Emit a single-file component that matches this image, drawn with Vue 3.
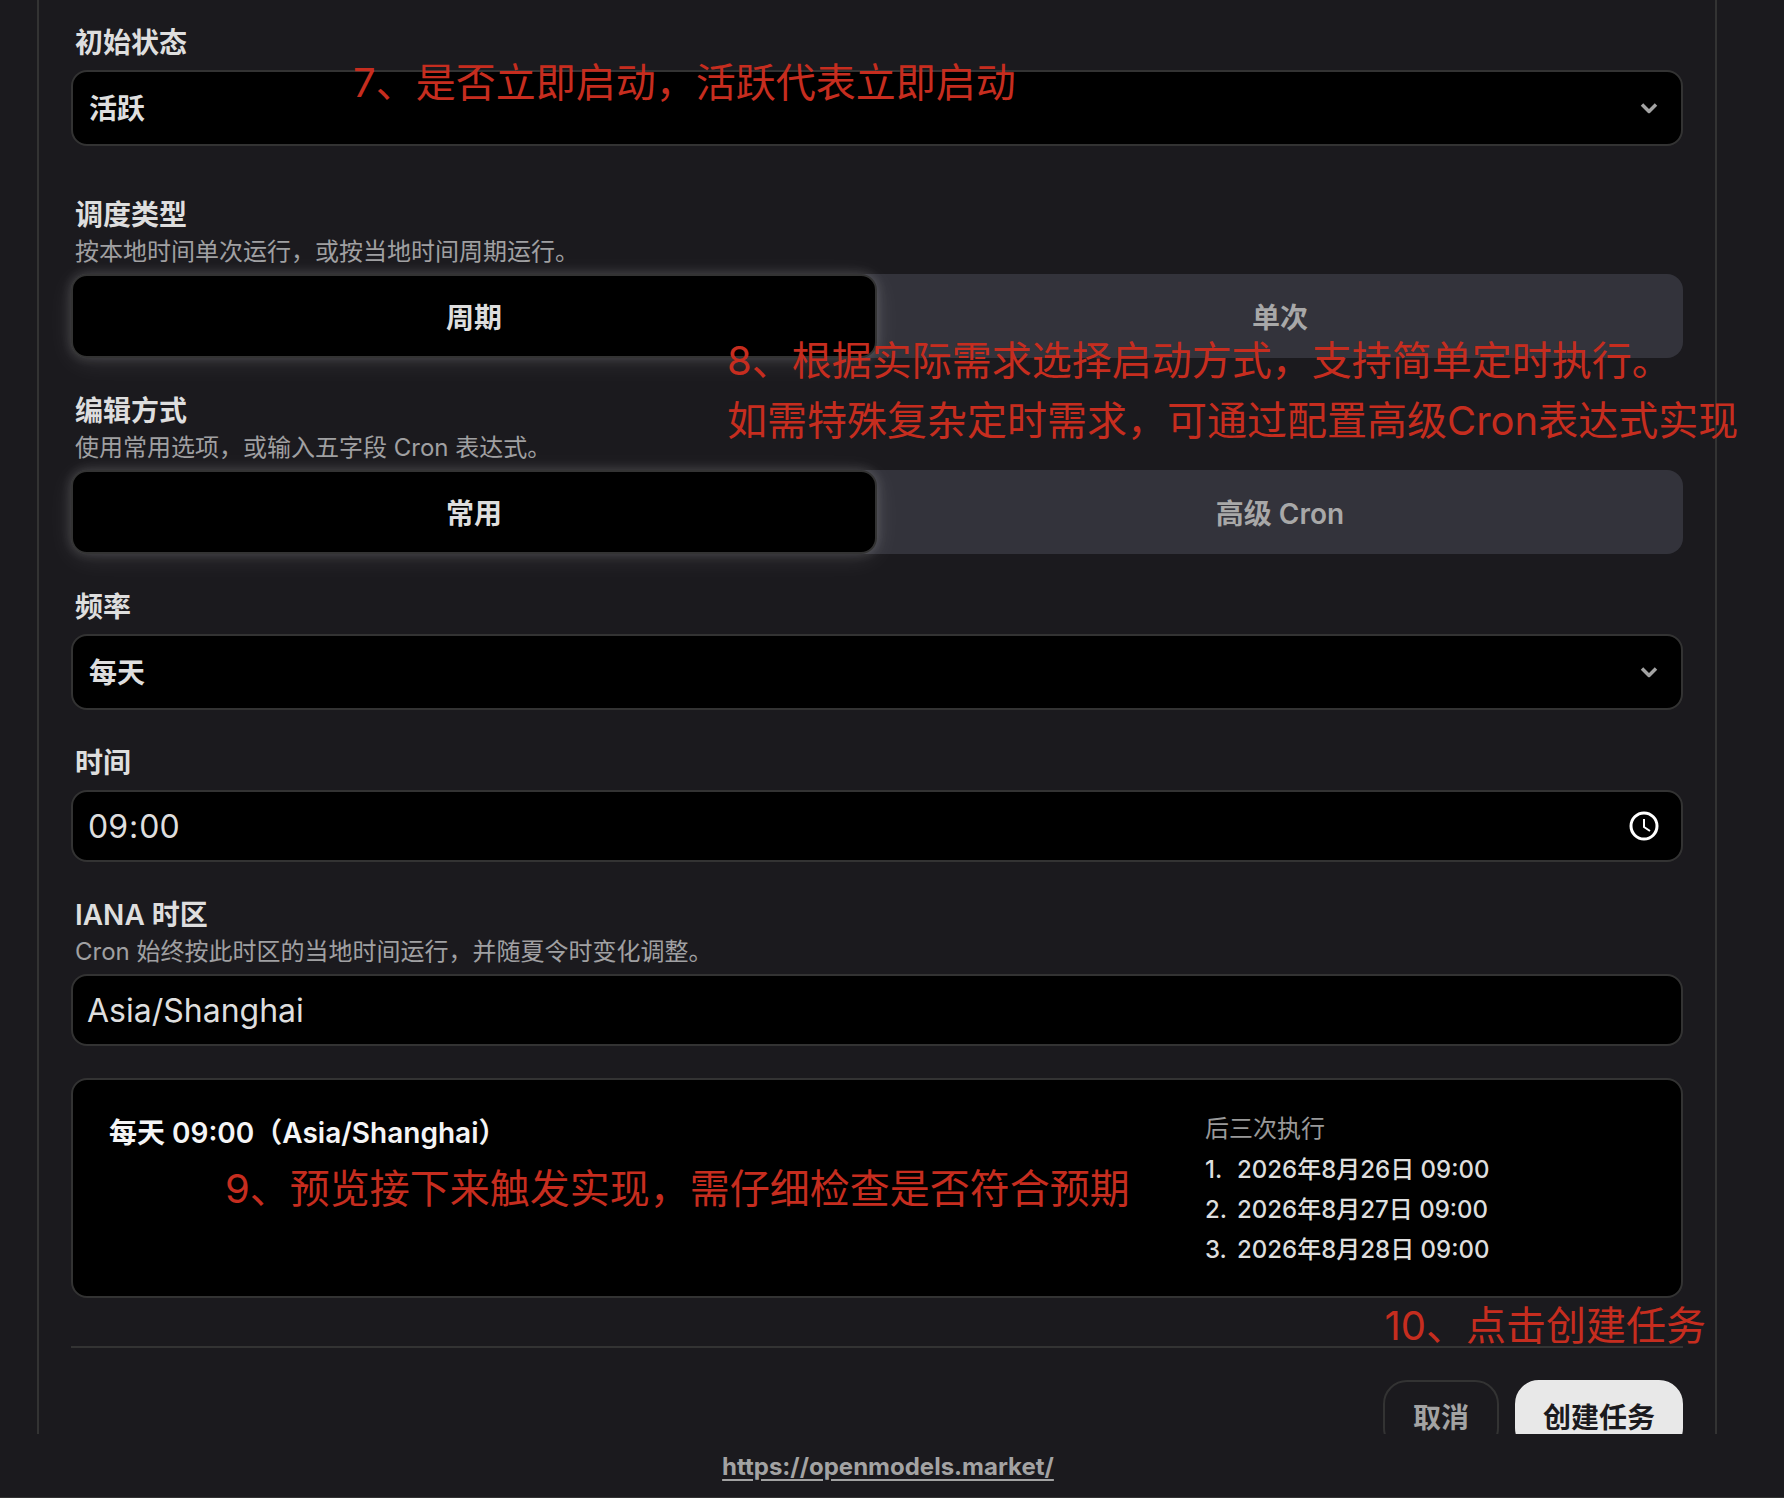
<script setup>
import { ref } from 'vue'

const status = ref('active')
const scheduleType = ref('recurring')
const editMode = ref('common')
const frequency = ref('daily')
const time = ref('09:00')
const timezone = ref('Asia/Shanghai')

const scheduleTypes = [
  { value: 'recurring', label: '周期' },
  { value: 'once', label: '单次' },
]
const editModes = [
  { value: 'common', label: '常用' },
  { value: 'cron', label: '高级 Cron' },
]
const nextRuns = ['2026年8月26日 09:00', '2026年8月27日 09:00', '2026年8月28日 09:00']
</script>

<template>
  <div class="page">
    <main class="viewport">
      <form class="panel" @submit.prevent>
        <div class="field field-last">
          <label class="label" for="status">初始状态</label>
          <div class="control">
            <select id="status" v-model="status" class="box select">
              <option value="active">活跃</option>
              <option value="paused">暂停</option>
            </select>
            <svg class="chevron" viewBox="0 0 24 24" aria-hidden="true"><path d="m6 9 6 6 6-6" /></svg>
          </div>
          <p class="note note-status">7、是否立即启动，活跃代表立即启动</p>
        </div>

        <div class="field" role="group" aria-labelledby="type-label">
          <span id="type-label" class="label">调度类型</span>
          <span class="hint">按本地时间单次运行，或按当地时间周期运行。</span>
          <div class="segment">
            <button
              v-for="item in scheduleTypes"
              :key="item.value"
              type="button"
              class="segment-item"
              :class="{ active: scheduleType === item.value }"
              :aria-pressed="scheduleType === item.value"
              @click="scheduleType = item.value"
            >{{ item.label }}</button>
          </div>
          <p class="note note-type">8、根据实际需求选择启动方式，支持简单定时执行。<br>如需特殊复杂定时需求，可通过配置高级Cron表达式实现</p>
        </div>

        <div class="field" role="group" aria-labelledby="mode-label">
          <span id="mode-label" class="label">编辑方式</span>
          <span class="hint">使用常用选项，或输入五字段 Cron 表达式。</span>
          <div class="segment">
            <button
              v-for="item in editModes"
              :key="item.value"
              type="button"
              class="segment-item"
              :class="{ active: editMode === item.value }"
              :aria-pressed="editMode === item.value"
              @click="editMode = item.value"
            >{{ item.label }}</button>
          </div>
        </div>

        <div class="field">
          <label class="label" for="frequency">频率</label>
          <div class="control">
            <select id="frequency" v-model="frequency" class="box select">
              <option value="daily">每天</option>
              <option value="weekly">每周</option>
            </select>
            <svg class="chevron" viewBox="0 0 24 24" aria-hidden="true"><path d="m6 9 6 6 6-6" /></svg>
          </div>
        </div>

        <div class="field">
          <label class="label" for="time">时间</label>
          <div class="control">
            <input id="time" v-model="time" class="box input time" type="time">
            <svg class="clock" viewBox="0 0 32 32" aria-hidden="true">
              <circle cx="16" cy="16" r="13" stroke-width="3" />
              <path d="M16 9v8l6 4" stroke-width="2" />
            </svg>
          </div>
        </div>

        <div class="field">
          <label class="label" for="timezone">IANA 时区</label>
          <span class="hint">Cron 始终按此时区的当地时间运行，并随夏令时变化调整。</span>
          <input id="timezone" v-model="timezone" class="box input" type="text">
        </div>

        <section class="preview">
          <h2 class="preview-title">每天 09:00（Asia/Shanghai）</h2>
          <div>
            <h3 class="runs-title">后三次执行</h3>
            <ol class="runs">
              <li v-for="(run, i) in nextRuns" :key="run" class="run">
                <span class="run-index">{{ i + 1 }}.</span>
                <span>{{ run }}</span>
              </li>
            </ol>
          </div>
          <p class="note note-preview">9、预览接下来触发实现，需仔细检查是否符合预期</p>
        </section>

        <div class="actions">
          <button type="button" class="btn btn-cancel">取消</button>
          <button type="submit" class="btn btn-primary">创建任务</button>
          <p class="note note-submit">10、点击创建任务</p>
        </div>
      </form>
    </main>
    <footer class="footer">
      <a class="site" href="https://openmodels.market/">https://openmodels.market/</a>
    </footer>
  </div>
</template>

<style>
body {
  margin: 0;
  background: #1b1a1e;
}
</style>

<style scoped>
.page {
  display: flex;
  flex-direction: column;
  height: 100vh;
  color: #dedede;
  font-family: Inter, "Noto Sans CJK SC", sans-serif;
  color-scheme: dark;
}

.page * {
  box-sizing: border-box;
}

.viewport {
  flex: 1;
  min-height: 0;
  overflow: hidden;
}

.panel {
  margin: 0 67px 0 37px;
  padding: 22px 32px 32px;
  border: solid #333;
  border-width: 0 2px;
}

.field {
  position: relative;
  display: flex;
  flex-direction: column;
  margin-bottom: 32px;
}

.field-last {
  margin-bottom: 48px;
}

.label {
  padding-left: 4px;
  font-size: 28px;
  font-weight: 600;
  line-height: 42px;
}

.hint {
  padding-left: 4px;
  color: #a0a0a2;
  font-size: 24px;
  line-height: 32px;
}

.control {
  position: relative;
}

.box {
  display: block;
  width: 100%;
  margin: 0;
  border: 2px solid #333;
  border-radius: 16px;
  background: #000;
  color: #dedede;
  font-family: inherit;
}

.control,
.hint + .box,
.segment {
  margin-top: 6px;
}

.select {
  height: 76px;
  padding: 2px 16px 0;
  appearance: none;
  font-size: 28px;
  font-weight: 600;
}

.input {
  height: 72px;
  padding: 0 14px;
  font-size: 32px;
}

.time::-webkit-calendar-picker-indicator {
  opacity: 0;
}

.time::-webkit-datetime-edit-ampm-field {
  display: none;
}

.chevron {
  position: absolute;
  top: 24px;
  right: 20px;
  width: 28px;
  height: 28px;
  fill: none;
  stroke: #a3a3a3;
  stroke-width: 3;
  stroke-linejoin: round;
  pointer-events: none;
}

.clock {
  position: absolute;
  top: 20px;
  right: 23px;
  width: 32px;
  height: 32px;
  fill: none;
  stroke: #fff;
  pointer-events: none;
}

.segment {
  display: grid;
  grid-template-columns: 1fr 1fr;
  border-radius: 16px;
  background: #33333b;
}

.segment-item {
  height: 84px;
  padding: 0;
  border: 2px solid transparent;
  border-radius: 16px;
  background: none;
  color: #a8a8a8;
  font-family: inherit;
  font-size: 28px;
  font-weight: 600;
}

.segment-item.active {
  border-color: #333;
  background: #000;
  color: #dedede;
  box-shadow: 0 0 12px rgba(255, 255, 255, 0.18), 0 4px 28px rgba(255, 255, 255, 0.09);
}

.preview {
  position: relative;
  display: grid;
  grid-template-columns: 1fr 440px;
  padding: 32px 36px 30px;
  border: 2px solid #333;
  border-radius: 16px;
  background: #000;
}

.preview-title {
  margin: 0;
  color: #f5f5f5;
  font-size: 28px;
  font-weight: 600;
  line-height: 42px;
}

.runs-title {
  margin: 0;
  color: #999;
  font-size: 24px;
  font-weight: 400;
  line-height: 34px;
}

.runs {
  margin: 0;
  padding: 0;
  list-style: none;
}

.run {
  display: flex;
  margin-top: 8px;
  font-size: 24px;
  font-weight: 500;
  line-height: 32px;
}

.run-index {
  width: 32px;
}

.actions {
  position: relative;
  display: flex;
  justify-content: flex-end;
  gap: 16px;
  margin-top: 48px;
  padding-top: 32px;
  border-top: 2px solid #333;
}

.btn {
  height: 72px;
  padding: 0 28px;
  border: 2px solid #333;
  border-radius: 24px;
  background: none;
  color: #a3a3a3;
  font-family: inherit;
  font-size: 28px;
  font-weight: 600;
}

.btn-primary {
  padding: 0 26px;
  border-color: #e8e8e8;
  background: #e8e8e8;
  color: #1b1a1e;
}

.note {
  position: absolute;
  z-index: 1;
  margin: 0;
  color: #c62d1f;
  font-size: 40px;
  font-weight: 400;
  line-height: 60px;
  white-space: nowrap;
  pointer-events: none;
}

.note-status {
  top: 31px;
  left: 282px;
}

.note-type {
  top: 137px;
  left: 656px;
}

.note-preview {
  top: 79px;
  left: 152px;
}

.note-submit {
  top: -52px;
  right: -23px;
}

.footer {
  display: flex;
  justify-content: center;
  padding: 17px 8px 14px 0;
  border-bottom: 1px solid #333;
}

.site {
  color: #a3a3a3;
  font-size: 24px;
  font-weight: 700;
  line-height: 32px;
  text-decoration-thickness: 2px;
  text-underline-offset: 4px;
}
</style>
